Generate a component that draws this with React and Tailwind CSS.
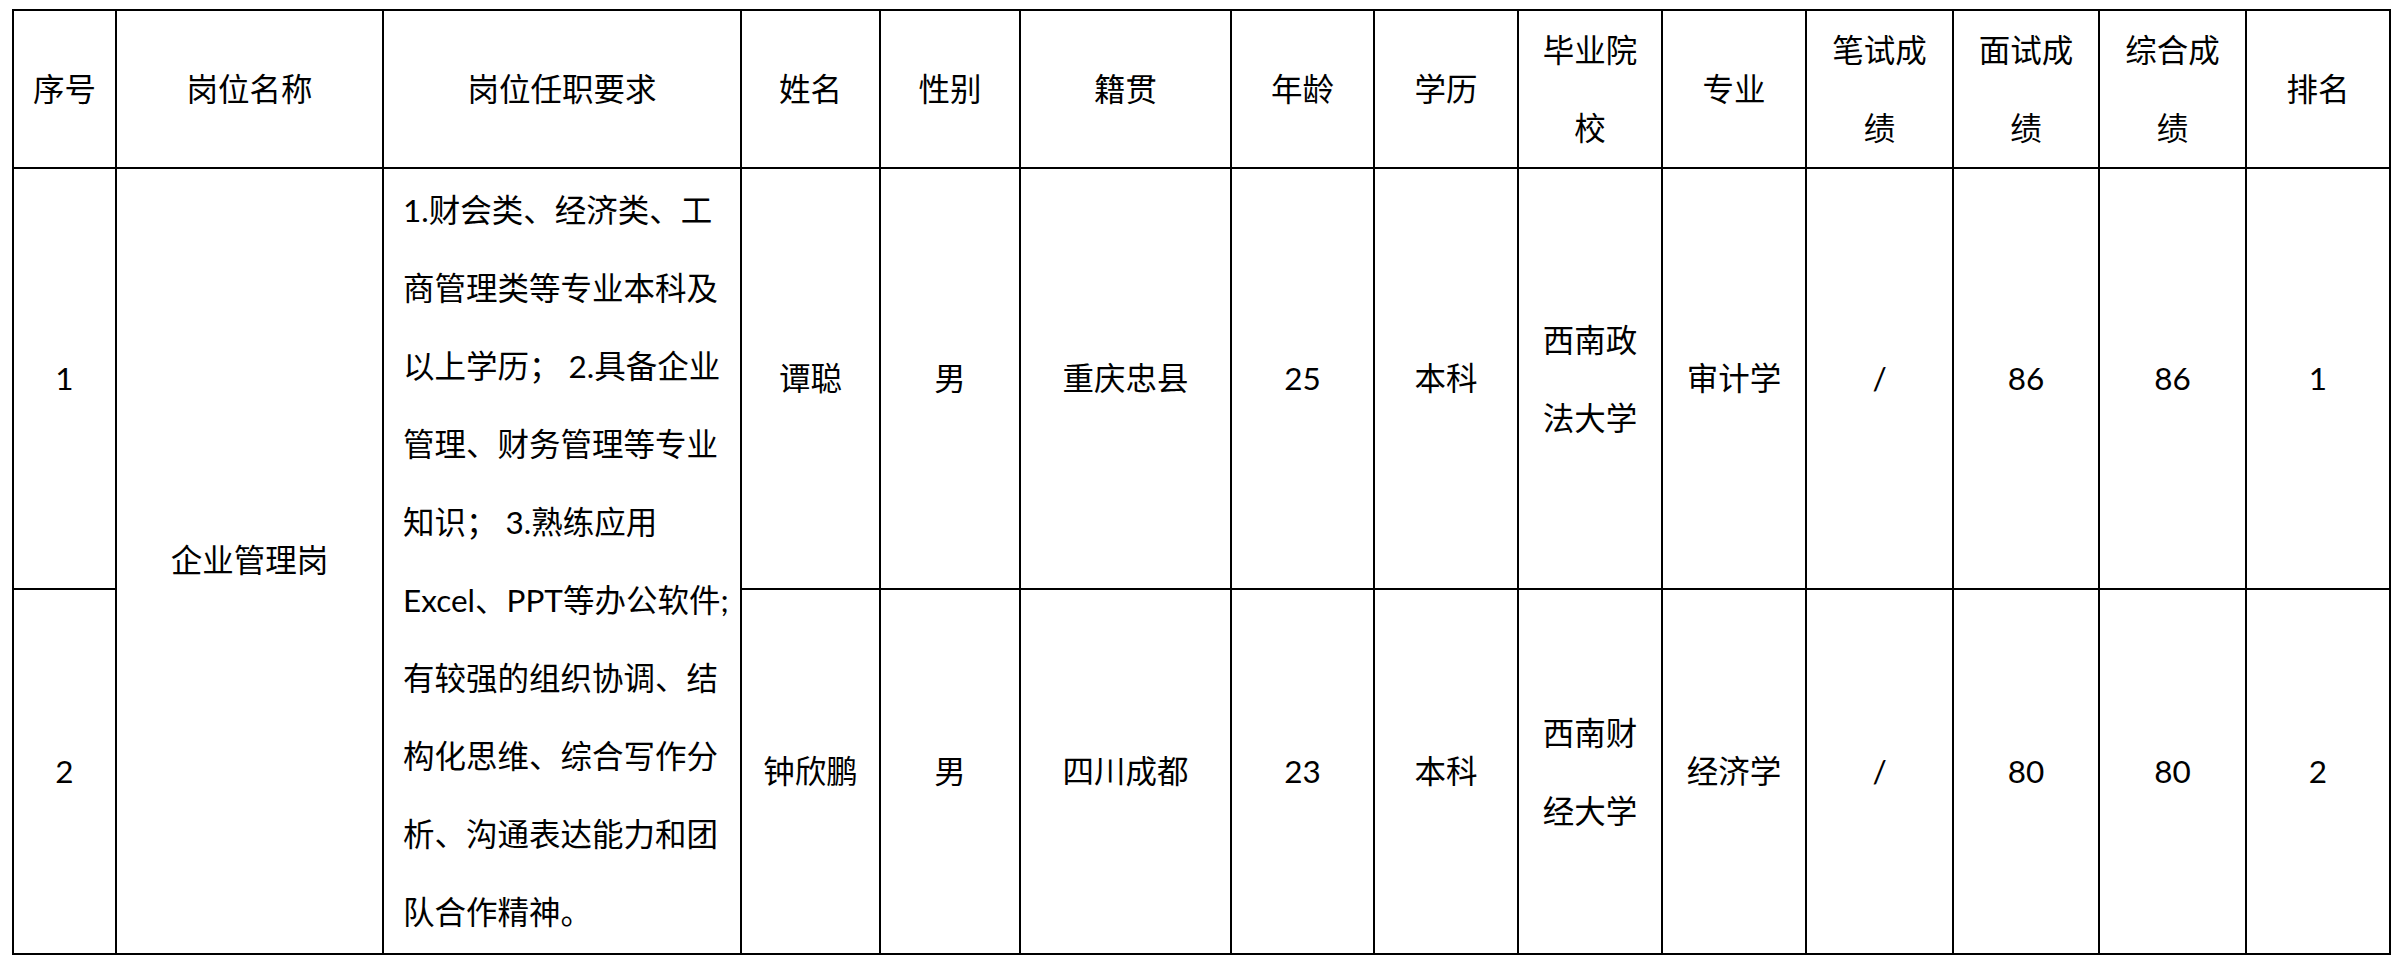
import React from "react";

const font = { fontFamily: "Lato, 'Noto Sans CJK SC', sans-serif" };

const cols = [103, 267, 358, 139, 140, 211, 143, 144, 144, 144, 147, 146, 147, 144];
const colCls = [
  "w-[103px]", "w-[267px]", "w-[358px]", "w-[139px]", "w-[140px]", "w-[211px]", "w-[143px]",
  "w-[144px]", "w-[144px]", "w-[144px]", "w-[147px]", "w-[146px]", "w-[147px]", "w-[144px]",
];

const td = "border-2 border-black text-center align-middle p-0";

function Lines({ lines }) {
  return (
    <div className="leading-[78px]">
      {lines.map((l, i) => (
        <div key={i} className="whitespace-nowrap">{l}</div>
      ))}
    </div>
  );
}

export default function App() {
  const headers = [
    ["序号"], ["岗位名称"], ["岗位任职要求"], ["姓名"], ["性别"], ["籍贯"], ["年龄"], ["学历"],
    ["毕业院", "校"], ["专业"], ["笔试成", "绩"], ["面试成", "绩"], ["综合成", "绩"], ["排名"],
  ];
  const req = [
    "1.财会类、经济类、工",
    "商管理类等专业本科及",
    "以上学历； 2.具备企业",
    "管理、财务管理等专业",
    "知识； 3.熟练应用",
    "Excel、PPT等办公软件;",
    "有较强的组织协调、结",
    "构化思维、综合写作分",
    "析、沟通表达能力和团",
    "队合作精神。",
  ];
  return (
    <div className="w-[2393px] h-[968px] bg-white pt-[9px] pl-[12px] text-black" style={font}>
      <table className="table-fixed border-collapse border-2 border-black w-[2379px] text-[31.5px]">
        <colgroup>
          {colCls.map((c, i) => (
            <col key={i} className={c} />
          ))}
        </colgroup>
        <tbody>
          <tr className="h-[158px]">
            {headers.map((h, i) => (
              <td key={i} className={td}>
                <Lines lines={h} />
              </td>
            ))}
          </tr>
          <tr className="h-[421px]">
            <td className={td}>1</td>
            <td className={td} rowSpan={2}>企业管理岗</td>
            <td className="border-2 border-black align-middle text-left pl-[19px] pr-0 py-0" rowSpan={2}>
              <Lines lines={req} />
            </td>
            <td className={td}>谭聪</td>
            <td className={td}>男</td>
            <td className={td}>重庆忠县</td>
            <td className={td}>25</td>
            <td className={td}>本科</td>
            <td className={td}><Lines lines={["西南政", "法大学"]} /></td>
            <td className={td}>审计学</td>
            <td className={td}>/</td>
            <td className={td}>86</td>
            <td className={td}>86</td>
            <td className={td}>1</td>
          </tr>
          <tr className="h-[365px]">
            <td className={td}>2</td>
            <td className={td}>钟欣鹏</td>
            <td className={td}>男</td>
            <td className={td}>四川成都</td>
            <td className={td}>23</td>
            <td className={td}>本科</td>
            <td className={td}><Lines lines={["西南财", "经大学"]} /></td>
            <td className={td}>经济学</td>
            <td className={td}>/</td>
            <td className={td}>80</td>
            <td className={td}>80</td>
            <td className={td}>2</td>
          </tr>
        </tbody>
      </table>
    </div>
  );
}
